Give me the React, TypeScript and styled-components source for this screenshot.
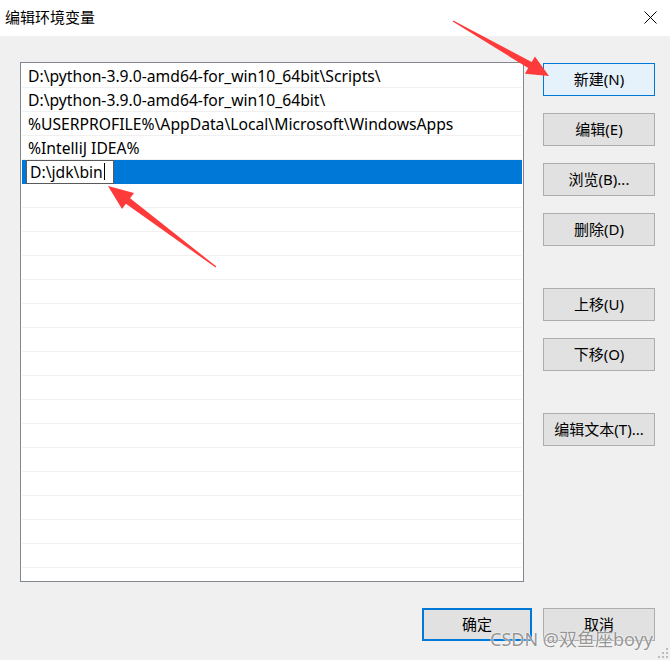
import React from "react";
import styled, { createGlobalStyle, css } from "styled-components";

const GlobalStyle = createGlobalStyle`
  html, body { margin: 0; padding: 0; background: #f0f0f0; }
  body { font-family: "Noto Sans", "Noto Sans CJK SC", sans-serif; }
`;

const FONT = `"Noto Sans", "Noto Sans CJK SC", sans-serif`;

const Window = styled.div`
  position: relative;
  width: 670px;
  height: 660px;
  overflow: hidden;
  background: #f0f0f0;
  font-family: ${FONT};
  color: #000;
`;

const TitleBar = styled.div`
  height: 36px;
  background: #ffffff;
  display: flex;
  align-items: center;
  justify-content: space-between;
  padding: 0 13px 0 5px;
`;

const Title = styled.div`
  font-size: 15px;
  line-height: 20px;
  margin-top: -2px;
`;

const CloseIcon = styled.svg`
  width: 13px;
  height: 13px;
  margin-top: -1px;
`;

const Body = styled.div`
  display: flex;
  flex-direction: column;
  padding: 26px 15px 0 20px;
`;

const Main = styled.div`
  display: flex;
  gap: 19px;
  height: 520px;
`;

const ListBox = styled.div`
  width: 504px;
  height: 520px;
  box-sizing: border-box;
  border: 1px solid #828790;
  background: #ffffff;
  padding: 1px 1px 0 1px;
  overflow: hidden;
`;

const Row = styled.div<{ $selected?: boolean }>`
  height: 24px;
  box-sizing: border-box;
  border-bottom: 1px solid #f0f0f0;
  display: flex;
  align-items: center;
  padding-left: 6px;
  font-size: 15.7px;
  white-space: nowrap;
  ${(p) =>
    p.$selected &&
    css`
      background: #0078d7;
      padding-left: 4px;
      border-bottom-color: #0078d7;
    `}
`;

const EditBox = styled.div`
  width: 88px;
  height: 24px;
  box-sizing: border-box;
  border: 1px solid #5a5a5a;
  background: #ffffff;
  display: flex;
  align-items: center;
  padding-left: 3px;
  font-size: 15.7px;
`;

const Caret = styled.span`
  display: inline-block;
  width: 1px;
  height: 17px;
  background: #000;
  margin-left: 1px;
`;

const ButtonColumn = styled.div`
  display: flex;
  flex-direction: column;
  padding-top: 1px;
`;

const Btn = styled.div<{ $variant?: "hover" | "default"; $gap?: number; $w?: number }>`
  width: ${(p) => p.$w ?? 112}px;
  height: 33px;
  box-sizing: border-box;
  display: flex;
  align-items: center;
  justify-content: center;
  padding-bottom: 3px;
  background: #e1e1e1;
  border: 1px solid #adadad;
  font-size: 15px;
  margin-top: ${(p) => p.$gap ?? 0}px;
  ${(p) =>
    p.$variant === "hover" &&
    css`
      background: #e5f1fb;
      border-color: #0078d7;
    `}
  ${(p) =>
    p.$variant === "default" &&
    css`
      border: 2px solid #0078d7;
    `}
`;

const Footer = styled.div`
  display: flex;
  justify-content: flex-end;
  gap: 11px;
  margin-top: 26px;
`;

const Watermark = styled.div`
  position: absolute;
  left: 490px;
  top: 625px;
  font-size: 18px;
  font-family: "Noto Sans", "Noto Sans CJK SC", sans-serif;
  color: rgba(130, 130, 130, 0.85);
  text-shadow: 0 0 1px #fff, 0 0 2px #fff;
  white-space: nowrap;
  pointer-events: none;
`;

const Overlay = styled.svg`
  position: absolute;
  left: 0;
  top: 0;
  width: 670px;
  height: 660px;
  pointer-events: none;
`;

const Grip = styled.svg`
  position: absolute;
  right: 1px;
  bottom: 1px;
  width: 11px;
  height: 11px;
`;

const rows = [
  "D:\\python-3.9.0-amd64-for_win10_64bit\\Scripts\\",
  "D:\\python-3.9.0-amd64-for_win10_64bit\\",
  "%USERPROFILE%\\AppData\\Local\\Microsoft\\WindowsApps",
  "%IntelliJ IDEA%",
];

function arrow(tail: [number, number], tip: [number, number], headLen: number, headHalf: number, shaftHalf: number) {
  const dx = tip[0] - tail[0];
  const dy = tip[1] - tail[1];
  const len = Math.hypot(dx, dy);
  const ux = dx / len, uy = dy / len;
  const nx = -uy, ny = ux;
  const bx = tip[0] - ux * headLen, by = tip[1] - uy * headLen;
  const pts = [
    [tail[0] + nx * 0.6, tail[1] + ny * 0.6],
    [bx + nx * shaftHalf, by + ny * shaftHalf],
    [bx + nx * headHalf, by + ny * headHalf],
    [tip[0], tip[1]],
    [bx - nx * headHalf, by - ny * headHalf],
    [bx - nx * shaftHalf, by - ny * shaftHalf],
    [tail[0] - nx * 0.6, tail[1] - ny * 0.6],
  ];
  return pts.map((p) => `${p[0].toFixed(1)},${p[1].toFixed(1)}`).join(" ");
}

export default function App() {
  const emptyRows = Array.from({ length: 17 });
  return (
    <>
      <GlobalStyle />
      <Window>
        <TitleBar>
          <Title>编辑环境变量</Title>
          <CloseIcon viewBox="0 0 13 13">
            <path d="M0.5 0.5 L12.5 12.5 M12.5 0.5 L0.5 12.5" stroke="#000" strokeWidth="1" fill="none" />
          </CloseIcon>
        </TitleBar>
        <Body>
          <Main>
            <ListBox>
              {rows.map((r) => (
                <Row key={r}>{r}</Row>
              ))}
              <Row $selected>
                <EditBox>
                  D:\jdk\bin
                  <Caret />
                </EditBox>
              </Row>
              {emptyRows.map((_, i) => (
                <Row key={i} />
              ))}
            </ListBox>
            <ButtonColumn>
              <Btn $variant="hover">新建(N)</Btn>
              <Btn $gap={17}>编辑(E)</Btn>
              <Btn $gap={17}>浏览(B)...</Btn>
              <Btn $gap={17}>删除(D)</Btn>
              <Btn $gap={42}>上移(U)</Btn>
              <Btn $gap={17}>下移(O)</Btn>
              <Btn $gap={42}>编辑文本(T)...</Btn>
            </ButtonColumn>
          </Main>
          <Footer>
            <Btn $variant="default" $w={110}>确定</Btn>
            <Btn>取消</Btn>
          </Footer>
        </Body>
        <Overlay viewBox="0 0 670 660">
          <polygon points={arrow([453, 21], [549, 76], 22, 10, 3.5)} fill="#ff3a3a" />
          <polygon points={arrow([216, 267], [108, 186], 25, 10, 3.5)} fill="#ff3a3a" />
        </Overlay>
        <Watermark>CSDN @双鱼座boyy</Watermark>
        <Grip viewBox="0 0 11 11">
          {[
            [8, 0], [8, 4], [4, 4], [8, 8], [4, 8], [0, 8],
          ].map(([x, y], i) => (
            <rect key={i} x={x} y={y} width="2" height="2" fill="#bcbcbc" />
          ))}
        </Grip>
      </Window>
    </>
  );
}
